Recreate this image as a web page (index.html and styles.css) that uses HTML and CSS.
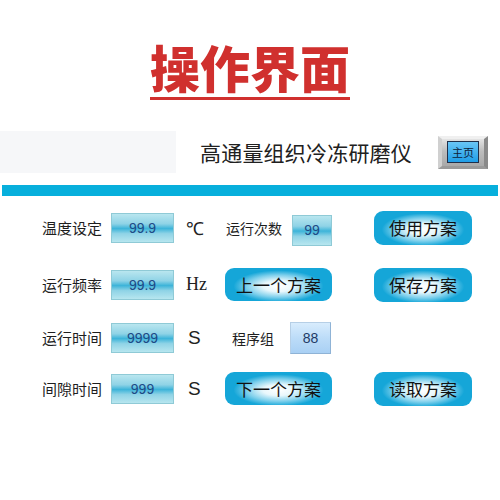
FILE: index.html
```html
<!DOCTYPE html>
<html>
<head>
<meta charset="utf-8">
<link rel="stylesheet" href="styles.css">
</head>
<body>
<div class="page">
  <div class="title-wrap"><h1 class="title">操作界面</h1></div>
  <div class="header">
    <div class="logo-box"></div>
    <div class="heading">高通量组织冷冻研磨仪</div>
    <div class="home-btn"><span class="home-inner">主页</span></div>
  </div>
  <div class="bar"></div>
  <div class="grid">
    <div class="label">温度设定</div>
    <div class="field">99.9</div>
    <div class="unit serif">℃</div>
    <div class="pair"><span class="label">运行次数</span><span class="field small">99</span></div>
    <div class="btn-cell"><button class="btn">使用方案</button></div>

    <div class="label">运行频率</div>
    <div class="field">99.9</div>
    <div class="unit serif">Hz</div>
    <div class="btn-cell"><button class="btn wide">上一个方案</button></div>
    <div class="btn-cell"><button class="btn">保存方案</button></div>

    <div class="label">运行时间</div>
    <div class="field">9999</div>
    <div class="unit">S</div>
    <div class="pair pair2"><span class="label">程序组</span><span class="field blue">88</span></div>
    <div></div>

    <div class="label">间隙时间</div>
    <div class="field">999</div>
    <div class="unit">S</div>
    <div class="btn-cell"><button class="btn wide">下一个方案</button></div>
    <div class="btn-cell"><button class="btn">读取方案</button></div>
  </div>
</div>
</body>
</html>
```

FILE: styles.css
```css
html, body {
  margin: 0;
  padding: 0;
  background: #ffffff;
}
.page {
  width: 500px;
  height: 500px;
  font-family: "Noto Sans CJK SC", "Noto Sans", sans-serif;
  color: #1e1e1e;
}
.title-wrap {
  display: flex;
  justify-content: center;
  padding-top: 37px;
  height: 95px;
  box-sizing: border-box;
}
.title {
  margin: 0;
  font-size: 50px;
  font-weight: 900;
  line-height: 58px;
  color: #d0302e;
  border-bottom: 3px solid #d0302e;
  height: 63px;
  box-sizing: border-box;
  width: 200px;
  text-align: center;
}
.header {
  display: flex;
  align-items: center;
  height: 42px;
  margin-top: 36px;
}
.logo-box {
  width: 176px;
  height: 42px;
  background: #f6f7f9;
}
.heading {
  margin-left: 24px;
  font-size: 21px;
  line-height: 26px;
  color: #202020;
  letter-spacing: 0.2px;
  width: 214px;
}
.home-btn {
  margin-left: 24px;
  width: 50px;
  height: 33px;
  box-sizing: border-box;
  display: flex;
  align-items: center;
  justify-content: center;
  background: linear-gradient(180deg, #e4e4e4 0%, #bdbdbd 45%, #a9a9a9 100%);
  border-top: 3px solid #f0f0f0;
  border-left: 4px solid #d0d0d0;
  border-right: 4px solid #8a8a8a;
  border-bottom: 3px solid #9a9a9a;
}
.home-inner {
  width: 32px;
  height: 22px;
  box-sizing: border-box;
  border: 1px solid #1f2f4a;
  background: linear-gradient(180deg, #69c6f6 0%, #1f9ee8 100%);
  font-size: 11px;
  line-height: 20px;
  text-align: center;
  color: #0d1d3a;
}
.bar {
  margin: 12px 2px 0 2px;
  height: 11px;
  background: #07afdc;
}
.grid {
  display: grid;
  grid-template-columns: 69px 63px 51px 149px 98px;
  grid-template-rows: 57px 57px 49px 53px;
  padding-left: 42px;
  margin-top: 3px;
  align-items: center;
}
.label {
  font-size: 15px;
  line-height: 20px;
  color: #1e1e1e;
  white-space: nowrap;
}
.field {
  height: 30px;
  box-sizing: border-box;
  border: 1px solid #8fcad6;
  background: linear-gradient(180deg, #b9e6ef 0%, #8fd3e6 35%, #3db4d9 52%, #8fd3e6 70%, #b7e6ef 100%);
  color: #1d4a86;
  font-family: "Liberation Sans", Arial, sans-serif;
  font-size: 14px;
  line-height: 28px;
  text-align: center;
}
.field.small {
  width: 40px;
  height: 31px;
  margin-left: 8px;
  margin-top: 6px;
}
.pair .label {
  font-size: 14px;
  width: 58px;
}
.field.blue {
  width: 41px;
  height: 32px;
  margin-left: 0;
  border: 1px solid #b6cfe6;
  border-right-color: #8fb3d6;
  border-bottom-color: #8fb3d6;
  background: linear-gradient(180deg, #d8ecfd 0%, #bcdcf8 50%, #a9d0f4 100%);
  color: #223a66;
  line-height: 30px;
}
.unit {
  padding-left: 14px;
  font-family: "Liberation Sans", Arial, sans-serif;
  font-size: 19px;
  color: #222;
}
.unit.serif {
  font-family: "Liberation Serif", "Times New Roman", serif;
  font-size: 18px;
  padding-left: 12px;
}
.pair {
  display: flex;
  align-items: center;
  padding-left: 1px;
}
.pair2 {
  padding-left: 7px;
}
.pair2 .label {
  width: 58px;
}
.btn-cell {
  display: flex;
}
.btn {
  width: 98px;
  height: 34px;
  border: none;
  border-radius: 9px;
  padding: 0;
  background: radial-gradient(ellipse 42% 48% at 50% 55%, #ffffff 0%, #e8f7fc 35%, #7fd0ec 70%, #15a6d8 100%);
  font-family: "Noto Sans CJK SC", sans-serif;
  font-size: 17px;
  color: #111;
  cursor: pointer;
}
.btn.wide {
  width: 107px;
  height: 33px;
}
```
